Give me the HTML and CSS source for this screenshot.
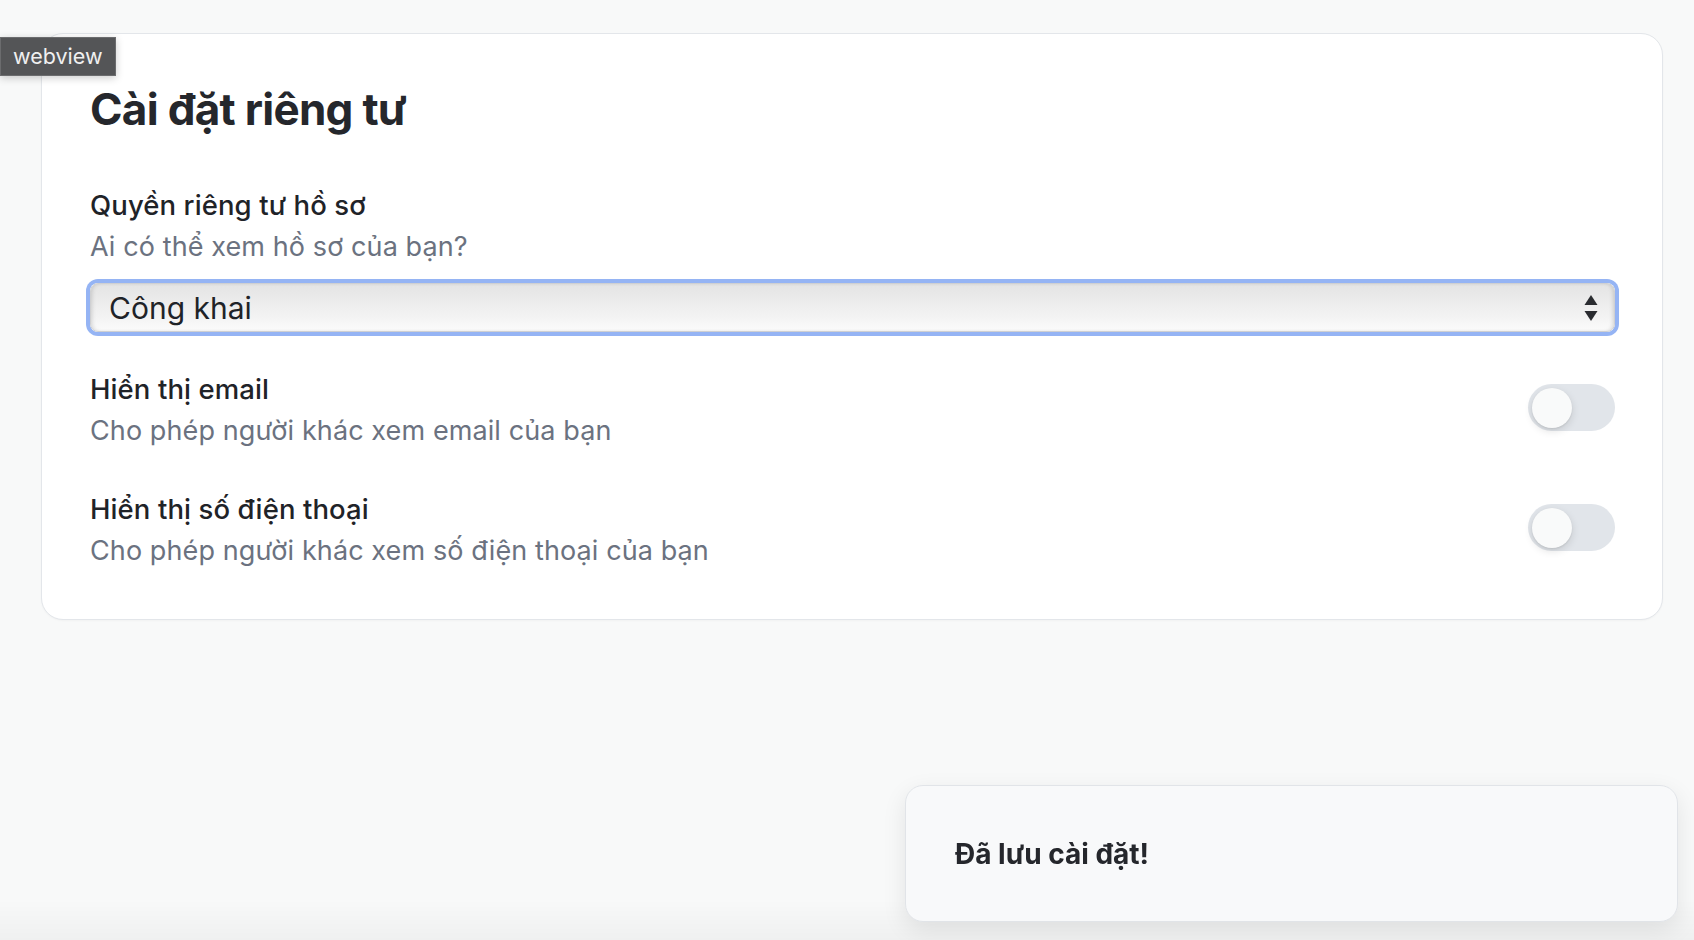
FILE: index.html
```html
<!DOCTYPE html>
<html lang="vi">
<head>
<meta charset="utf-8">
<title>Cài đặt riêng tư</title>
<link rel="stylesheet" href="styles.css">
</head>
<body>
<div class="badge">webview</div>
<main class="page">
  <section class="card">
    <h1 class="title">Cài đặt riêng tư</h1>

    <div class="field">
      <div class="label">Quyền riêng tư hồ sơ</div>
      <div class="desc">Ai có thể xem hồ sơ của bạn?</div>
      <div class="select-wrap">
        <select class="select">
          <option>Công khai</option>
          <option>Bạn bè</option>
          <option>Chỉ mình tôi</option>
        </select>
        <svg class="select-arrows" width="14" height="28" viewBox="0 0 14 28" aria-hidden="true">
          <path d="M7 1 L13.5 11 L0.5 11 Z" fill="#2a2c30"/>
          <path d="M7 27 L13.5 17 L0.5 17 Z" fill="#2a2c30"/>
        </svg>
      </div>
    </div>

    <div class="row">
      <div class="row-text">
        <div class="label">Hiển thị email</div>
        <div class="desc">Cho phép người khác xem email của bạn</div>
      </div>
      <div class="toggle"><span class="knob"></span></div>
    </div>

    <div class="row">
      <div class="row-text">
        <div class="label">Hiển thị số điện thoại</div>
        <div class="desc">Cho phép người khác xem số điện thoại của bạn</div>
      </div>
      <div class="toggle"><span class="knob"></span></div>
    </div>
  </section>
</main>

<div class="toast">Đã lưu cài đặt!</div>
<div class="bottom-fade"></div>
</body>
</html>
```

FILE: styles.css
```css
* { box-sizing: border-box; }

html, body {
  margin: 0;
  height: 100%;
}

body {
  background: #f8f9f9;
  font-family: Inter, "Noto Sans", "Liberation Sans", sans-serif;
  color: #1f2328;
  overflow: hidden;
}

.page {
  padding: 33px 31px 0 41px;
}

.card {
  background: #ffffff;
  border: 1px solid #e3e6ea;
  border-radius: 22px;
  padding: 47px 47px 48px 48px;
  box-shadow: 0 1px 2px rgba(0, 0, 0, 0.03);
}

.title {
  margin: 0;
  font-size: 44px;
  line-height: 56px;
  font-weight: 700;
  letter-spacing: -0.7px;
  color: #25272c;
}

.field {
  margin-top: 48px;
}

.label {
  font-size: 27.5px;
  line-height: 40px;
  font-weight: 500;
  color: #1f2328;
  letter-spacing: 0.1px;
}

.desc {
  margin-top: 2px;
  font-size: 27px;
  line-height: 40px;
  font-weight: 400;
  color: #6b7280;
  letter-spacing: 0.1px;
}

.select-wrap {
  position: relative;
  margin-top: 16px;
}

.select {
  -webkit-appearance: none;
  appearance: none;
  display: block;
  width: 100%;
  height: 49px;
  padding: 0 40px 0 18px;
  font-family: Inter, "Noto Sans", "Liberation Sans", sans-serif;
  font-size: 30px;
  color: #1f2328;
  background: linear-gradient(#e4e4e4, #f3f3f3 70%, #fbfbfb);
  border: 1px solid #cfd0d2;
  border-radius: 8px;
  box-shadow: 0 0 0 4px #95b4f4, inset 3px 0 4px -2px rgba(0, 0, 0, 0.15), inset -3px 0 4px -2px rgba(0, 0, 0, 0.15);
  outline: none;
}

.select-arrows {
  position: absolute;
  right: 17px;
  top: 11px;
  pointer-events: none;
}

.row {
  display: flex;
  align-items: center;
  justify-content: space-between;
  margin-top: 37px;
}

.row + .row {
  margin-top: 38px;
}

.row-text {
  display: flex;
  flex-direction: column;
}

.toggle {
  position: relative;
  width: 87px;
  height: 47px;
  border-radius: 24px;
  background: #e1e5ea;
  padding: 4px;
  margin-top: -6px;
  flex-shrink: 0;
}

.knob {
  display: block;
  width: 40px;
  height: 40px;
  border-radius: 50%;
  background: #f9fafa;
  box-shadow: 0 3px 8px rgba(0, 0, 0, 0.12), 0 1px 2px rgba(0, 0, 0, 0.08);
}

.badge {
  position: absolute;
  left: 0;
  top: 37px;
  z-index: 10;
  width: 116px;
  height: 39px;
  background: #545557;
  border: 1px solid #6b6c6e;
  color: #f0f0f0;
  font-family: Inter, "Noto Sans", "Liberation Sans", sans-serif;
  font-size: 21.5px;
  line-height: 37px;
  padding-left: 12px;
  box-shadow: 0 2px 8px rgba(0, 0, 0, 0.2);
}

.toast {
  position: fixed;
  left: 905px;
  top: 785px;
  width: 773px;
  height: 137px;
  display: flex;
  align-items: center;
  padding-left: 49px;
  background: #f8f9fa;
  border: 1px solid #e1e4e8;
  border-radius: 18px;
  box-shadow: 0 8px 24px rgba(0, 0, 0, 0.09);
  font-size: 28px;
  font-weight: 700;
  color: #25272c;
  z-index: 5;
}

.bottom-fade {
  position: fixed;
  left: 0;
  right: 0;
  bottom: 0;
  height: 40px;
  background: linear-gradient(rgba(0, 0, 0, 0), rgba(0, 0, 0, 0.035));
  pointer-events: none;
  z-index: 4;
}
```
